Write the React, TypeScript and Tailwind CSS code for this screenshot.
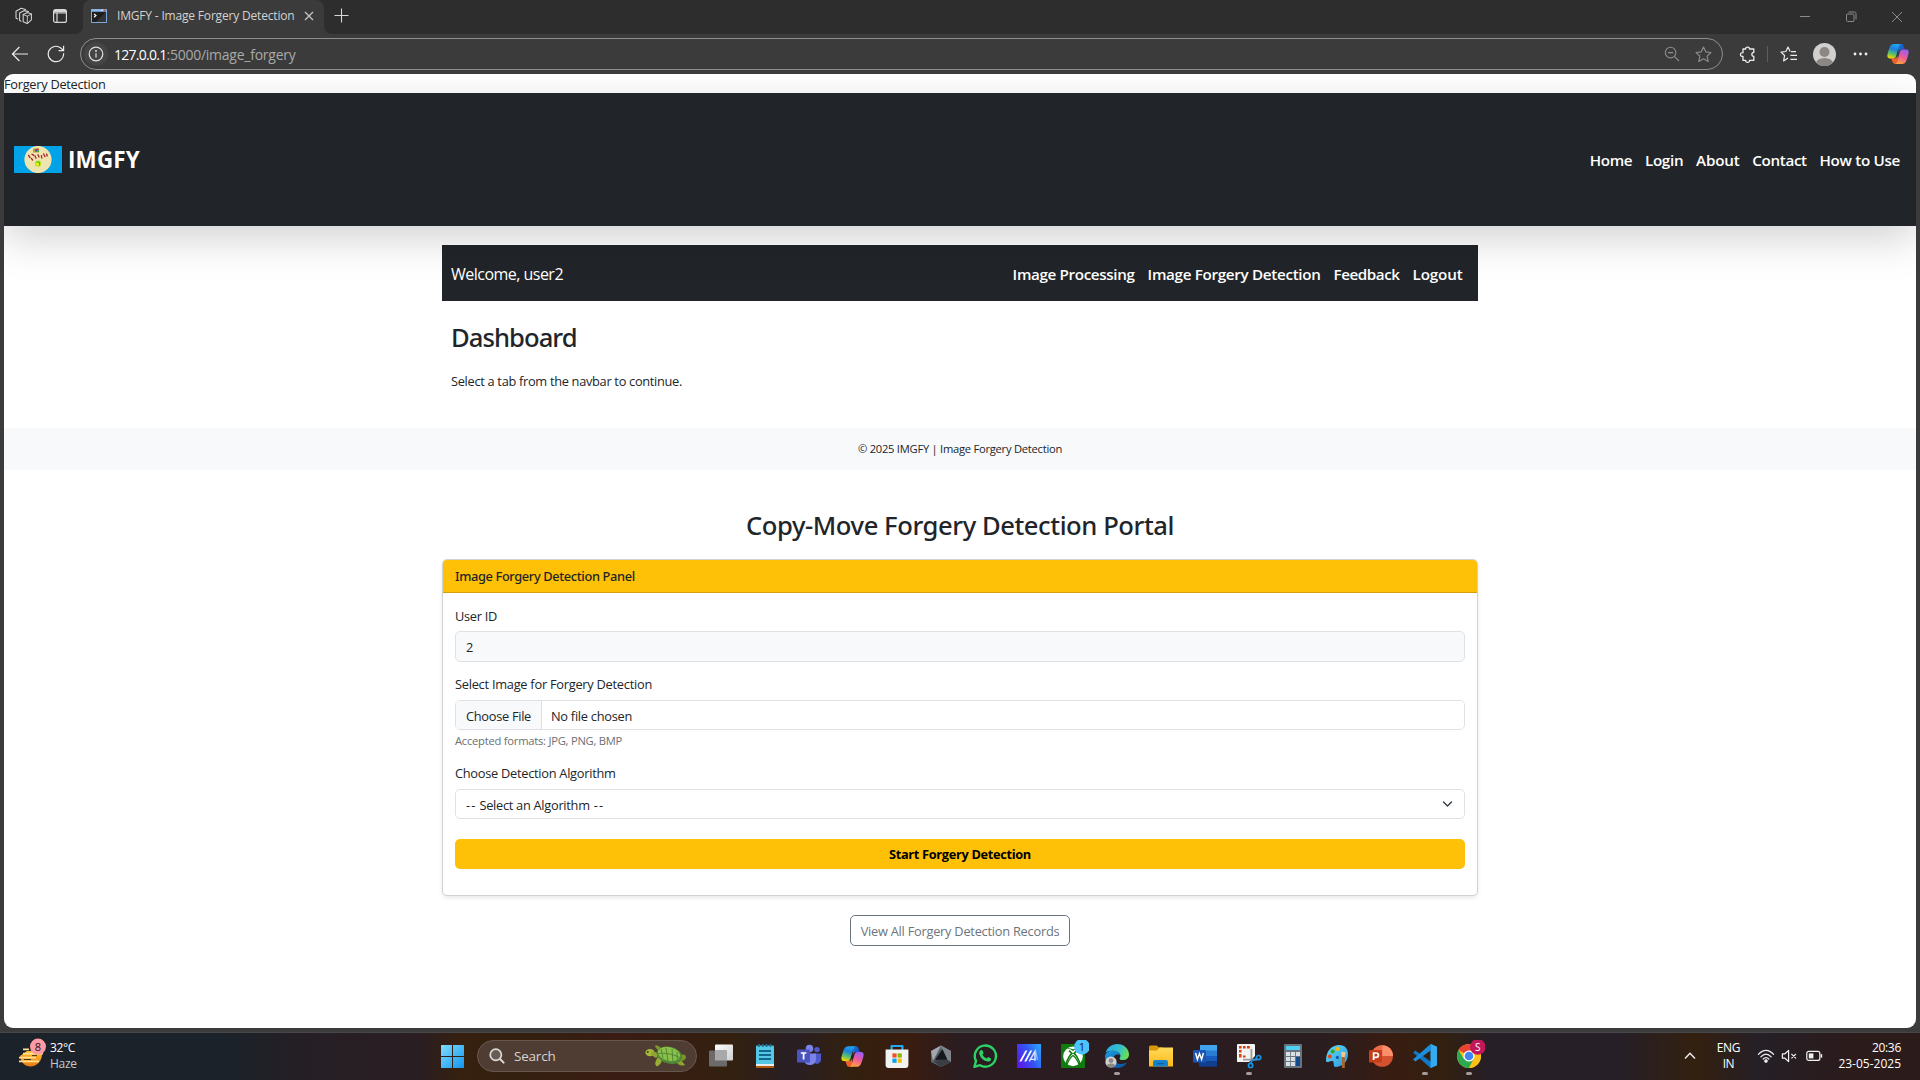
import type { ReactNode } from "react";

/* ---------- Browser chrome icons ---------- */

function WorkspacesIcon() {
  return (
    <svg width="18" height="18" viewBox="0 0 18 18" fill="none" stroke="#cfcfcf" strokeWidth="1.1" strokeLinejoin="round" strokeLinecap="round">
      <path d="M8.2 7.6 L12.4 5.6 L16.4 7 V12.8 L12.2 16.6 L8.2 14.8 Z" />
      <path d="M8.2 7.6 L12.4 9.2 L16.4 7 M12.4 9.2 L12.2 16.6" strokeWidth="0.9" />
      <path d="M6 14.2 L4.6 13.4 V6 L9.4 3.6 L13.4 4.6" />
      <path d="M2.6 12 L1 11 V4.2 L6.2 1.2 L10.6 2.6" />
    </svg>
  );
}

function TabActionsIcon() {
  return (
    <svg width="16" height="16" viewBox="0 0 16 16" fill="none" stroke="#d6d6d6" strokeWidth="1.2">
      <rect x="1.6" y="1.6" width="12.8" height="12.8" rx="2" />
      <path d="M1.6 5 H14.4 M5 5 V14" />
      <path d="M2 3.2 H14" strokeWidth="2.4" />
    </svg>
  );
}

function ConsoleFavicon() {
  return (
    <svg width="16" height="14" viewBox="0 0 16 14">
      <rect x="0" y="0" width="16" height="14" rx="0.8" fill="#7fa9dc" />
      <rect x="0.4" y="0.4" width="15.2" height="1.8" fill="#8fb9ef" />
      <rect x="10" y="0.8" width="1.6" height="1" fill="#e6f0fb" />
      <rect x="12.8" y="0.6" width="2" height="1.4" fill="#d6403a" />
      <rect x="1" y="2.8" width="14" height="10.2" fill="#1d1d1d" />
      <path d="M15 2.8 V13 H5 Z" fill="#333" />
      <path d="M3 5 L5 6.6 L3 8.2" fill="none" stroke="#fff" strokeWidth="1.1" />
    </svg>
  );
}

function CopilotLogo({ id, size }: { id: string; size: number }) {
  const a = `${id}-a`;
  const b = `${id}-b`;
  const c = `${id}-c`;
  return (
    <svg width={size} height={size} viewBox="0 0 24 24">
      <defs>
        <linearGradient id={a} x1="0.6" y1="0" x2="0.3" y2="1">
          <stop offset="0" stopColor="#1fa8f0" />
          <stop offset="0.35" stopColor="#1c7fe0" />
          <stop offset="0.7" stopColor="#5cc06a" />
          <stop offset="1" stopColor="#f6d800" />
        </linearGradient>
        <linearGradient id={b} x1="0.7" y1="0" x2="0.3" y2="1">
          <stop offset="0" stopColor="#9a5cf5" />
          <stop offset="0.5" stopColor="#ee5a9a" />
          <stop offset="1" stopColor="#ffa53a" />
        </linearGradient>
        <linearGradient id={c} x1="0" y1="0" x2="1" y2="0.6">
          <stop offset="0" stopColor="#1680e0" />
          <stop offset="1" stopColor="#1b3fb8" />
        </linearGradient>
      </defs>
      <path d="M12 1.2 H15.5 C17.6 1.2 18 2.6 18.6 4.8 C19 6.4 19.6 7.2 21 7.2 H15.6 C13.6 7.2 13 8.6 12.4 10.8 Z" fill={`url(#${c})`} />
      <path d="M12 22.8 H8.8 C6.6 22.8 6.1 21.4 5.5 19.2 C5.1 17.6 4.4 16.8 3 16.8 H8.4 C10.4 16.8 11 15.4 11.6 13.2 Z" fill="#f0602f" />
      <path d="M8 1.2 H15.5 C13.8 1.2 13.2 2.5 12.6 4.6 L10 13.8 C9.4 15.9 8.6 16.8 6.8 16.8 H3 C0.6 16.8 0 15 0.5 12.6 C1.2 9.4 2.2 6.6 3.2 4.2 C4.2 2 5.6 1.2 8 1.2 Z" fill={`url(#${a})`} />
      <path d="M16 22.8 H8.6 C10.3 22.8 10.8 21.5 11.4 19.4 L14 10.2 C14.6 8.1 15.4 7.2 17.2 7.2 H21 C23.4 7.2 24 9 23.5 11.4 C22.8 14.6 21.8 17.4 20.8 19.8 C19.8 22 18.4 22.8 16 22.8 Z" fill={`url(#${b})`} />
    </svg>
  );
}

function TabStrip() {
  return (
    <div className="flex h-[34px] shrink-0 items-start bg-[#2d2d2d]">
      <div className="flex h-[32px] w-[83px] shrink-0 items-center gap-[19px] pl-[15px]">
        <WorkspacesIcon />
        <TabActionsIcon />
      </div>
      <div className="relative flex h-[34px] w-[241px] shrink-0 items-start rounded-t-lg bg-[#3b3b3b] pl-[8px]">
        <svg className="absolute -left-[8px] bottom-0" width="8" height="8" viewBox="0 0 8 8"><path d="M8 0 V8 H0 C4.4 8 8 4.4 8 0 Z" fill="#3b3b3b" /></svg>
        <svg className="absolute -right-[8px] bottom-0" width="8" height="8" viewBox="0 0 8 8"><path d="M0 0 V8 H8 C3.6 8 0 4.4 0 0 Z" fill="#3b3b3b" /></svg>
        <div className="flex h-[32px] items-center">
          <ConsoleFavicon />
          <span className="ml-[10px] w-[187px] whitespace-nowrap text-[12px] tracking-[-0.18px] text-[#d2d2d2]">IMGFY - Image Forgery Detection</span>
          <svg width="10" height="10" viewBox="0 0 10 10" stroke="#c8c8c8" strokeWidth="1.2"><path d="M1 1 L9 9 M9 1 L1 9" /></svg>
        </div>
      </div>
      <svg className="ml-[10px] mt-[8px]" width="15" height="15" viewBox="0 0 15 15" stroke="#d8d8d8" strokeWidth="1.1"><path d="M7.5 0.5 V14.5 M0.5 7.5 H14.5" /></svg>
      <div className="ml-auto flex h-[33px] items-center gap-[34px] pr-[17px]">
        <svg width="12" height="12" viewBox="0 0 12 12" stroke="#8a8a8a"><path d="M1 5.5 H11" /></svg>
        <svg width="12" height="12" viewBox="0 0 12 12" fill="none" stroke="#8a8a8a"><rect x="1.5" y="3" width="7.5" height="7.5" rx="1" /><path d="M3.5 1 H9.5 Q11 1 11 2.5 V8.5" /></svg>
        <svg width="12" height="12" viewBox="0 0 12 12" stroke="#8a8a8a"><path d="M1 1 L11 11 M11 1 L1 11" /></svg>
      </div>
    </div>
  );
}

const STAR = "M8 1 L10.1 5.5 L15 6.1 L11.4 9.5 L12.4 14.6 L8 12.1 L3.6 14.6 L4.6 9.5 L1 6.1 L5.9 5.5 Z";

function Toolbar() {
  return (
    <div className="flex h-[40px] shrink-0 items-center bg-[#3b3b3b] pl-[11px] pr-[11px]">
      <svg width="18" height="16" viewBox="0 0 18 16" fill="none" stroke="#ececec" strokeWidth="1.2"><path d="M17 8 H1.4 M8.4 1 L1.4 8 L8.4 15" /></svg>
      <svg className="ml-[18px]" width="18" height="18" viewBox="0 0 18 18" fill="none" stroke="#ececec" strokeWidth="1.2"><path d="M16.6 8.2 A7.7 7.7 0 1 1 13.8 3 L16.4 5.4 M16.6 0.8 V5.6 H11.6" /></svg>
      <div className="ml-[15px] flex h-[32px] w-[1643px] shrink-0 items-center rounded-full border border-[#8e8e8e] pl-[3px] pr-[10px]">
        <div className="flex h-[24px] w-[24px] items-center justify-center rounded-full bg-[#454545]">
          <svg width="16" height="16" viewBox="0 0 16 16" fill="none" stroke="#e0e0e0" strokeWidth="1.2"><circle cx="8" cy="8" r="6.8" /><path d="M8 7.2 V11.4" /><circle cx="8" cy="5" r="0.4" /></svg>
        </div>
        <div className="ml-[6px] flex pt-px text-[14px] leading-[30px]">
          <span className="tracking-[-0.73px] text-white">127.0.0.1</span>
          <span className="tracking-[-0.25px] text-[#a9a9a9]">:5000/image_forgery</span>
        </div>
        <svg className="ml-auto" width="16" height="16" viewBox="0 0 16 16" fill="none" stroke="#8c8c8c" strokeWidth="1.1"><circle cx="6.6" cy="6.6" r="5.3" /><path d="M10.4 10.4 L15 15 M4 6.6 H9.2" /></svg>
        <svg className="ml-[15px]" width="17" height="17" viewBox="0 0 16 16" fill="none" stroke="#8c8c8c" strokeWidth="1.1" strokeLinejoin="round"><path d={STAR} /></svg>
      </div>
      <svg className="ml-[16px]" width="17" height="17" viewBox="0 0 17 17" fill="none" stroke="#ececec" strokeWidth="1.3" strokeLinejoin="round">
        <path d="M4 3 H6.7 C6.4 0.4 10.8 0.4 10.5 3 H14.8 V6.4 C12.2 6.2 12.2 10.6 14.8 10.3 V14.4 H10.5 C10.8 17 6.4 17 6.7 14.4 H4 V10.5 C0.6 10.8 0.6 6.3 4 6.6 Z" />
      </svg>
      <div className="ml-[11px] h-[16px] w-px bg-[#5e5e5e]" />
      <svg className="ml-[12px]" width="17" height="17" viewBox="0 0 17 17" fill="none" stroke="#ececec" strokeWidth="1.2" strokeLinejoin="round">
        <path d="M11 5.6 L16 5.6 M5.9 5.5 L8 1 L10.1 5.5 M5.9 5.5 L1 6.1 L4.6 9.5 L3.6 14.9 L8 12.1 M10.4 9.4 H17 M10.4 13.3 H17" />
      </svg>
      <svg className="ml-[16px]" width="23" height="23" viewBox="0 0 23 23">
        <defs><clipPath id="avatar-clip"><circle cx="11.5" cy="11.5" r="11.5" /></clipPath></defs>
        <g clipPath="url(#avatar-clip)"><rect width="23" height="23" fill="#d2d0ce" /><circle cx="11.5" cy="9" r="5" fill="#8a8784" /><ellipse cx="11.5" cy="20.5" rx="8.5" ry="5.6" fill="#8a8784" /></g>
      </svg>
      <svg className="ml-[17px]" width="15" height="4" viewBox="0 0 15 4" fill="#f0f0f0"><circle cx="2" cy="2" r="1.4" /><circle cx="7.5" cy="2" r="1.4" /><circle cx="13" cy="2" r="1.4" /></svg>
      <div className="ml-auto"><CopilotLogo id="bar" size={22} /></div>
    </div>
  );
}

/* ---------- Web page ---------- */

function SiteLogo() {
  return (
    <svg width="48" height="27" viewBox="0 0 48 27">
      <rect width="48" height="27" fill="#00a2e8" />
      <circle cx="24" cy="13.5" r="13.6" fill="#efe4b0" />
      <rect x="19" y="2.5" width="6" height="4" fill="#b5a642" />
      <rect x="21" y="3.4" width="2" height="2" fill="#3f48cc" />
      <rect x="22.5" y="2.6" width="2" height="1.6" fill="#ed1c24" />
      <rect x="23" y="4.4" width="2" height="1.6" fill="#22b14c" />
      <path d="M14.6 9.4 L16 11.6 M18 8.2 L19.8 9.4 M17.4 12.4 L18.6 14 M21 10 L22 12.2 M24 8.8 L25 11 M27.4 9.6 L27.8 12 M29.6 8 L31 10.6 M32.6 8 L33.2 10" stroke="#a3202c" strokeWidth="1.3" strokeLinecap="round" />
      <circle cx="24" cy="17.6" r="3.2" fill="#b5e61d" />
      <path d="M22.5 16 H25.5 V19.5" fill="none" stroke="#22b14c" strokeWidth="0.8" />
      <circle cx="23.6" cy="18.2" r="1.3" fill="#fff200" />
    </svg>
  );
}

function SiteHeader() {
  return (
    <header className="relative z-10 flex h-[133px] items-center bg-[#212529] pl-[10px] pr-[16px] shadow-[0_12.8px_38.4px_rgba(0,0,0,0.175)]">
      <SiteLogo />
      <span className="ml-[6px] pt-px text-[22.4px] font-bold tracking-[0.2px] text-white">IMGFY</span>
      <nav className="ml-auto flex gap-[12.8px] pt-px text-[15.2px] font-semibold text-white">
        <a className="tracking-[-0.4px]">Home</a>
        <a className="tracking-[-0.3px]">Login</a>
        <a className="tracking-[-0.2px]">About</a>
        <a className="tracking-[-0.35px]">Contact</a>
        <a className="tracking-[-0.32px]">How to Use</a>
      </nav>
    </header>
  );
}

function UserBar() {
  return (
    <div className="mx-auto mt-[19px] flex h-[56px] w-[1036px] items-center bg-[#212529] pl-[9px] pr-[15.5px] text-white">
      <span className="pt-px text-[16px] tracking-[-0.52px]">Welcome, user2</span>
      <nav className="ml-auto flex gap-[13px] pt-[2px] text-[15.2px] font-semibold">
        <a className="tracking-[-0.35px]">Image Processing</a>
        <a className="tracking-[-0.31px]">Image Forgery Detection</a>
        <a className="tracking-[-0.45px]">Feedback</a>
        <a className="tracking-[-0.15px]">Logout</a>
      </nav>
    </div>
  );
}

function DetectionPanel() {
  return (
    <section className="mx-auto mt-[17px] h-[337px] w-[1036px] overflow-hidden rounded-[5px] border border-[#d1d2d3] bg-white shadow-[0_2px_4px_rgba(0,0,0,0.09)]">
      <div className="flex h-[33px] items-center border-b border-[#d3a00b] bg-[#ffc107] pl-[12px] pt-[2px] font-['Noto_Sans',sans-serif] font-medium tracking-[-0.35px]">
        Image Forgery Detection Panel
      </div>
      <div className="px-[12px]">
        <label className="mt-[14px] block h-[19px] leading-[19px] tracking-[-0.29px]">User ID</label>
        <div className="mt-[5px] h-[31px] rounded-[5px] border border-[#dee2e6] bg-[#f8f9fb] pl-[10px] leading-[31px]">2</div>
        <label className="mt-[13px] block h-[19px] leading-[19px] tracking-[-0.25px]">Select Image for Forgery Detection</label>
        <div className="mt-[6px] flex h-[30px] overflow-hidden rounded-[5px] border border-[#dee2e6] leading-[30px]">
          <span className="w-[86px] border-r border-[#dee2e6] bg-[#f8f9fb] pl-[10px] tracking-[-0.29px]">Choose File</span>
          <span className="pl-[9px] tracking-[-0.27px]">No file chosen</span>
        </div>
        <p className="mt-[2px] h-[17px] text-[11.2px] leading-[17px] tracking-[-0.24px] text-[#6c6f72]">Accepted formats: JPG, PNG, BMP</p>
        <label className="mt-[15px] block h-[19px] leading-[19px] tracking-[-0.27px]">Choose Detection Algorithm</label>
        <div className="mt-[6px] flex h-[30px] items-center rounded-[5px] border border-[#dee2e6] pl-[10px] pr-[11px] leading-[20px] tracking-[-0.28px]">
          <span className="pt-px tracking-[1.1px]">--</span>
          <span className="ml-[3px] pt-px">Select an Algorithm</span>
          <span className="ml-[4px] pt-px tracking-[1.1px]">--</span>
          <svg className="ml-auto" width="11" height="8" viewBox="0 0 11 8" fill="none" stroke="#343a40" strokeWidth="1.4" strokeLinecap="round" strokeLinejoin="round"><path d="M1.5 2 L5.5 6 L9.5 2" /></svg>
        </div>
        <button className="mt-[20px] block h-[30px] w-full rounded-[5px] bg-[#ffc107] font-bold leading-[30px] tracking-[-0.33px] text-black">Start Forgery Detection</button>
      </div>
    </section>
  );
}

function WebPage() {
  return (
    <main className="mx-[4px] mb-[4px] flex-1 overflow-hidden rounded-[9px] bg-white text-[12.8px] text-[#212529]">
      <div className="h-[19px] leading-[20px] tracking-[-0.28px]">Forgery Detection</div>
      <SiteHeader />
      <UserBar />
      <div className="mx-auto w-[1036px] pl-[9px]">
        <h2 className="mt-[21px] h-[32px] font-['Noto_Sans',sans-serif] text-[25.6px] font-medium leading-[32px] tracking-[-0.95px]">Dashboard</h2>
        <p className="mt-[18px] h-[19px] leading-[19px] tracking-[-0.3px]">Select a tab from the navbar to continue.</p>
      </div>
      <footer className="mt-[37px] flex h-[42px] items-center justify-center bg-[#f8f9fb] text-[11.2px] tracking-[-0.26px]">© 2025 IMGFY | Image Forgery Detection</footer>
      <h2 className="mt-[40px] h-[32px] text-center font-['Noto_Sans',sans-serif] text-[25.6px] font-medium leading-[32px] tracking-[-0.43px]">Copy-Move Forgery Detection Portal</h2>
      <DetectionPanel />
      <div className="mt-[19px] flex justify-center">
        <button className="h-[31px] w-[220px] rounded-[5px] border border-[#6c757d] pt-px leading-[29px] tracking-[-0.24px] text-[#6c757d]">View All Forgery Detection Records</button>
      </div>
    </main>
  );
}

/* ---------- Taskbar ---------- */

function App24({ children, running }: { children: ReactNode; running?: boolean }) {
  return (
    <div className="relative flex h-full w-[44px] shrink-0 items-center justify-center">
      <svg width="32" height="32" viewBox="-4 -4 32 32">{children}</svg>
      {running && <span className="absolute bottom-[4px] left-[19px] h-[3px] w-[6px] rounded-full bg-[#a39c9b]" />}
    </div>
  );
}

function Turtle() {
  return (
    <svg width="44" height="24" viewBox="0 0 44 24">
      <ellipse cx="6" cy="8.6" rx="4.6" ry="3.6" fill="#a5b83a" />
      <path d="M8 7 Q13 8 15 11 L12 14 Q9 12 7 11 Z" fill="#8fa52e" />
      <path d="M16 3 Q12 0 11 2 Q12 6 17 7 Z" fill="#7f9a2c" />
      <path d="M14 13 Q9 20 13 22.5 Q18 20 18 15 Z" fill="#9aae35" />
      <path d="M32 18 Q36 23 41 21 Q38 17 35 15 Z" fill="#8fa52e" />
      <path d="M37 11 Q42 9 42 14 Q39 18 34 17 Z" fill="#7b962b" />
      <ellipse cx="25.5" cy="11.2" rx="13" ry="8.4" transform="rotate(14 25.5 11.2)" fill="#4f8a36" />
      <ellipse cx="25" cy="10" rx="11.4" ry="6.8" transform="rotate(14 25 10)" fill="#8dbf4b" />
      <path d="M17 5 L19 14 M22 3.8 L24 17 M28 5 L29 18 M33 8 L33.5 18 M14 9.5 Q25 8 37 14" stroke="#4f8a36" strokeWidth="1" fill="none" />
      <circle cx="3.8" cy="8" r="0.9" fill="#2f3a12" />
    </svg>
  );
}

function Weather() {
  return (
    <div className="flex w-[441px] shrink-0 items-center">
      <svg className="ml-[18px] mt-[-7px]" width="30" height="30" viewBox="0 0 30 30">
        <defs><linearGradient id="sun" x1="0" y1="0" x2="0" y2="1"><stop offset="0" stopColor="#ffc234" /><stop offset="1" stopColor="#ea7a14" /></linearGradient></defs>
        <path d="M2 18 C3 25 7 28.4 12.4 28.4 C19 28.4 24 23 24 16 L22 13 H9 Z" fill="url(#sun)" />
        <path d="M5 11.4 H11 M5 15.6 H25 M1 19.6 H18 M1 23.4 H21" stroke="#ffdf90" strokeWidth="1.9" />
        <path d="M6 21.5 H13 M14 17.6 H19" stroke="#4a3010" strokeWidth="1" />
        <circle cx="20" cy="8.6" r="8" fill="#ff99a4" />
        <text x="20" y="12.6" textAnchor="middle" fontSize="11" fill="#1c1216" fontFamily="Open Sans, sans-serif">8</text>
      </svg>
      <div className="ml-[2px] mt-[-1px] text-[12px] leading-[16px]">
        <div className="tracking-[-0.36px] text-white">32°C</div>
        <div className="tracking-[-0.3px] text-[#c6c8cb]">Haze</div>
      </div>
    </div>
  );
}

function AppIcons() {
  return (
    <div className="ml-[2px] flex h-full">
      <App24>
        <defs><linearGradient id="tv" x1="0" y1="0" x2="1" y2="1"><stop offset="0" stopColor="#fff" /><stop offset="1" stopColor="#cfcfcf" /></linearGradient></defs>
        <rect x="6" y="0.5" width="18" height="16" rx="1" fill="url(#tv)" />
        <rect x="0" y="6.5" width="18" height="16" rx="1" fill="#6b6b6b" />
        <rect x="6" y="6.5" width="12" height="10" fill="#a9a9a9" />
      </App24>
      <App24>
        <rect x="3" y="1.5" width="18" height="20" rx="1" fill="#54c6e6" />
        <path d="M3 20 H21 V22 H3 Z" fill="#e8eef0" /><path d="M3 22 H21 V24 H3 Z" fill="#b3590d" />
        <path d="M6 0 V3 M9.8 0 V3 M13.6 0 V3 M17.6 0 V3" stroke="#1a6f92" strokeWidth="1.7" />
        <path d="M6 7 H18 M6 11 H18 M6 15 H18" stroke="#12688c" strokeWidth="1.8" />
      </App24>
      <App24>
        <circle cx="20" cy="5.6" r="2.7" fill="#5059c9" /><circle cx="12.5" cy="4.6" r="3.8" fill="#7b83eb" />
        <path d="M17 9.4 H24 V16 A4 4 0 0 1 17 18.5 Z" fill="#5059c9" />
        <path d="M7 9.4 H19 V16 A6.2 6.4 0 0 1 7 16.5 Z" fill="#7b83eb" />
        <rect x="0" y="5.6" width="13" height="13" rx="1.2" fill="#4b53bc" />
        <path d="M3.8 9 H9.4 M6.6 9 V15.6" stroke="#fff" strokeWidth="1.7" />
      </App24>
      <div className="flex h-full w-[44px] items-center justify-center pr-px"><CopilotLogo id="task" size={23} /></div>
      <App24>
        <path d="M6.6 6 V2 H17.4 V6" fill="none" stroke="#23a9f2" strokeWidth="2.2" strokeLinejoin="round" />
        <path d="M0.6 5.6 H23.4 V21 Q23.4 24 20.4 24 H3.6 Q0.6 24 0.6 21 Z" fill="#f2f2f2" />
        <rect x="7.4" y="9.4" width="4.2" height="4.2" fill="#f25022" /><rect x="12.6" y="9.4" width="4.2" height="4.2" fill="#7fba00" />
        <rect x="7.4" y="14.6" width="4.2" height="4.2" fill="#00a4ef" /><rect x="12.6" y="14.6" width="4.2" height="4.2" fill="#ffb900" />
      </App24>
      <App24>
        <path d="M12 1.5 L22 7 V18 L12 23 L2 18 V7 Z" fill="#596069" />
        <path d="M12 1.5 L22 7 V18 L15 14 Z" fill="#7f858c" /><path d="M12 1.5 L2 7 L4 17 Z" fill="#a2a8ae" />
        <path d="M4 17 L12 23 L22 18 L17 15 Z" fill="#3a3f46" />
        <path d="M13.4 5 L6 16 L18.4 15.4 Z" fill="#15181c" />
      </App24>
      <App24>
        <path d="M1.4 22.8 L3 17 A10.6 10.6 0 1 1 7 21.2 Z" fill="none" stroke="#2bd366" strokeWidth="2.4" strokeLinejoin="round" />
        <path d="M7.2 6.6 Q9.2 5.4 9.8 7.2 L10.6 9.2 L9.4 10.8 Q10.8 13.4 13.6 14.6 L15.2 13 L18 14.4 Q18.2 17.6 14.8 17.6 Q8.2 16.6 6.2 9.8 Q6 8 7.2 6.6 Z" fill="#2bd366" />
      </App24>
      <App24>
        <defs><linearGradient id="my" x1="0" y1="0.7" x2="1" y2="0.2"><stop offset="0" stopColor="#5a1be8" /><stop offset="0.5" stopColor="#3552f5" /><stop offset="1" stopColor="#2aa0fa" /></linearGradient></defs>
        <rect width="24" height="24" fill="url(#my)" />
        <path d="M2.4 17.6 L8.4 6.6 H10.4 L4.4 17.6 Z M7.2 17.6 L13.2 6.6 H15.2 L9.2 17.6 Z" fill="#fff" />
        <path d="M12.2 17.4 L18 7.4 V16.8 M14 15.4 H18" fill="none" stroke="#dfe9ff" strokeWidth="1.4" />
        <path d="M18.6 6.6 L20.4 16" stroke="#a9c6ff" strokeWidth="1" />
      </App24>
      <App24>
        <rect width="24" height="24" rx="1" fill="#107c10" /><circle cx="12" cy="12.4" r="9.8" fill="#fff" />
        <path d="M5.2 4.8 Q8.6 4 12 7 Q15.4 4 18.8 4.8 Q17 3.4 12 5.2 Q7 3.4 5.2 4.8 Z" fill="#107c10" />
        <path d="M5 20 Q7.4 12.4 11 9.4 L8 6.6 M19 20 Q16.6 12.4 13 9.4 L16 6.6" fill="none" stroke="#107c10" strokeWidth="1.6" />
        <path d="M6 20.5 Q9 13.5 12 11.6 Q15 13.5 18 20.5" fill="none" stroke="#107c10" strokeWidth="1.2" />
        <circle cx="21" cy="2.8" r="7.8" fill="#4cc2ff" />
        <text x="21" y="6.8" textAnchor="middle" fontSize="11" fill="#10202c" fontFamily="Open Sans, sans-serif">1</text>
      </App24>
      <App24 running>
        <defs>
          <linearGradient id="ed1" x1="0" y1="0.2" x2="1" y2="0.5"><stop offset="0" stopColor="#2aa9e8" /><stop offset="0.6" stopColor="#35c1c9" /><stop offset="1" stopColor="#6be04e" /></linearGradient>
          <linearGradient id="ed2" x1="0" y1="0" x2="0.6" y2="1"><stop offset="0" stopColor="#1b9de2" /><stop offset="1" stopColor="#0c59a4" /></linearGradient>
        </defs>
        <path d="M0.6 9 C2 3.6 6.6 0 12.2 0 C19 0 24 5 24 10.4 C24 14 21 16 18 16 C14.8 16 14 14.8 15 13.4 C16.4 11 14.4 8 10.6 7.2 C6.6 6.4 2.4 7 0.6 9 Z" fill="url(#ed1)" />
        <path d="M0 12 C0.6 8.6 4 6.8 8 6.8 C11.6 6.8 14.6 8.6 15.2 11 C11 9.6 8 12 8.6 15.6 C9.4 19.6 14 21.6 21.8 18.4 C20 22 16.2 24 12 24 C5 24 0 18.6 0 12 Z" fill="url(#ed2)" />
        <circle cx="6" cy="18" r="5.6" fill="#d2d0ce" /><circle cx="6" cy="16.6" r="2.4" fill="#8a8784" /><path d="M2 22 Q2.4 19.6 6 19.6 Q9.6 19.6 10 22 Q6 25 2 22 Z" fill="#8a8784" />
      </App24>
      <App24>
        <path d="M0 3 Q0 1.4 1.4 1.4 H7.6 L10 3.6 H14 V8 H0 Z" fill="#d99a08" />
        <defs><linearGradient id="fo" x1="0" y1="0" x2="0" y2="1"><stop offset="0" stopColor="#ffda57" /><stop offset="1" stopColor="#fdb91c" /></linearGradient></defs>
        <path d="M0 6.4 H8 L10.4 3.6 H24 V22.6 H0 Z" fill="url(#fo)" />
        <path d="M4 22.6 V18 Q4 16 6 16 H17 Q19 16 19 18 V22.6 Z" fill="#1783cf" /><path d="M8 19.6 H15" stroke="#0d5f9e" strokeWidth="1.2" />
      </App24>
      <App24>
        <path d="M7 1 H24 V7 H7 Z" fill="#41a5ee" /><path d="M6 6.5 H24 V12 H6 Z" fill="#2b7cd3" /><path d="M6 12 H24 V17.5 H6 Z" fill="#185abd" /><path d="M6 17.4 H24 V22.6 H6 Z" fill="#103f91" />
        <rect x="0" y="6" width="13" height="12.6" rx="1.2" fill="#1c55b0" />
        <path d="M2.6 9 L4.4 15.4 L6.5 9.6 L8.6 15.4 L10.4 9" fill="none" stroke="#fff" strokeWidth="1.5" />
      </App24>
      <App24 running>
        <path d="M0 1 Q0 0 1 0 H17 Q18 0 18 1 V12 L12 18 H0 Z" fill="#f3f3f3" />
        <path d="M14.4 5 V17 M6 15.6 H20" stroke="#9b9b9b" strokeWidth="1.8" />
        <path d="M2 2 H4.6 V4.6 H2 Z M6 2 H8.6 V4.6 H6 Z M10 2 H12.8 V4.6 H10 Z M2 6 H4.6 V8.6 H2 Z M2 10 H4.6 V13.6 H2 Z M6 11.4 H8.6 V13.6 H6 Z" fill="#d9400f" />
        <circle cx="21.6" cy="13.6" r="2.1" fill="none" stroke="#1594e0" strokeWidth="1.7" /><circle cx="13.6" cy="21.4" r="2.1" fill="none" stroke="#1594e0" strokeWidth="1.7" /><path d="M20 14.6 L14.6 16.6 L14 19.4" fill="none" stroke="#1594e0" strokeWidth="1.8" />
      </App24>
      <App24>
        <rect x="3" y="0" width="18" height="24" rx="1" fill="#68737c" /><rect x="5" y="2" width="14" height="4" fill="#50d0f5" />
        <path d="M5 8 H9.2 V12 H5 Z M10 8 H14 V12 H10 Z M14.9 8 H19 V12 H14.9 Z M5 13 H9.2 V17 H5 Z M10 13 H14 V17 H10 Z M5 18 H9.2 V22 H5 Z M10 18 H14 V22 H10 Z" fill="#dadfe3" />
        <path d="M15 13 H19 V22 H15 Z" fill="#0f4c8f" />
      </App24>
      <App24>
        <defs><linearGradient id="pa" x1="0" y1="0" x2="1" y2="1"><stop offset="0" stopColor="#63dcf8" /><stop offset="1" stopColor="#2a97e0" /></linearGradient></defs>
        <path d="M1 16 C1 6 8 1 14 1 C20.4 1 23 5 23 10 C23 18 17 23 10.6 23 C7 23 10.4 17 7 17 C4 17 1 20 1 16 Z" fill="url(#pa)" />
        <circle cx="4.8" cy="12.6" r="2" fill="#e04a1c" /><circle cx="7.6" cy="7.4" r="2" fill="#37a70f" /><circle cx="12.6" cy="5" r="2" fill="#ffb900" /><circle cx="12.4" cy="13.4" r="1.6" fill="#0d5f9e" />
        <path d="M16 8 H20.6 L19.6 14 H17 Z" fill="#f3c98a" /><path d="M17 13 H19.8 V24 H17 Z" fill="#a8642b" />
      </App24>
      <App24>
        <circle cx="13.2" cy="12" r="10.8" fill="#d35230" /><path d="M13.2 1.2 A10.8 10.8 0 0 1 24 12 H13.2 Z" fill="#ff8f6b" /><path d="M13.2 1.2 V12 H2.4 A10.8 10.8 0 0 1 13.2 1.2 Z" fill="#ed6c47" />
        <rect x="0" y="6" width="13" height="12.6" rx="1.2" fill="#c43e1c" />
        <path d="M4.6 16 V9 H7 Q9.4 9 9.4 11.2 Q9.4 13.3 7 13.3 H4.6" fill="none" stroke="#fff" strokeWidth="1.7" />
      </App24>
      <App24 running>
        <path d="M17.6 0 L24 2.8 V21.2 L17.6 24 L0 8.6 L2.4 6.4 L17.6 17.6 Z" fill="#1079c4" />
        <path d="M17.6 0 L0 15.4 L2.4 17.6 L17.6 6.4 Z" fill="#1b8fde" /><path d="M17.6 0 L24 2.8 V21.2 L17.6 24 Z" fill="#35abf3" />
      </App24>
      <App24 running>
        <circle cx="12" cy="12" r="12" fill="#fbc116" />
        <path d="M12 12 L1.6 6 A12 12 0 0 1 22.4 6 Z" fill="#ea4335" /><path d="M1.6 6 A12 12 0 0 0 12 24 L17.2 15 L12 12 L6.8 15 Z" fill="#2da94f" />
        <path d="M12 6.6 H22.7 A12 12 0 0 1 12 24 L16.8 14.6 Z" fill="#fbc116" />
        <circle cx="12" cy="12" r="5.6" fill="#fff" /><circle cx="12" cy="12" r="4.3" fill="#4285f4" />
        <circle cx="20.8" cy="2.9" r="7.8" fill="#c2185b" />
        <text x="20.8" y="6.6" textAnchor="middle" fontSize="10" fill="#fff" fontFamily="Open Sans, sans-serif">S</text>
      </App24>
    </div>
  );
}

function Tray() {
  return (
    <div className="ml-auto flex h-full items-center pr-[19px] text-[12px] leading-[16px] text-white">
      <svg width="12" height="8" viewBox="0 0 12 8" fill="none" stroke="#f0f0f0" strokeWidth="1.4"><path d="M1 6.4 L6 1.2 L11 6.4" /></svg>
      <div className="ml-[20px] w-[24px] text-center tracking-[-0.45px]"><div>ENG</div><div>IN</div></div>
      <svg className="ml-[17px]" width="18" height="14" viewBox="0 0 18 14" fill="none" stroke="#f0f0f0" strokeWidth="1.2" strokeLinecap="round">
        <path d="M1.4 5.4 Q9 -2.6 16.6 5.4 M3.8 7.8 Q9 2.4 14.2 7.8 M6.2 10 Q9 7.2 11.8 10" /><circle cx="9" cy="12" r="1.2" fill="#f0f0f0" />
      </svg>
      <svg className="ml-[6px]" width="17" height="14" viewBox="0 0 17 14" fill="none" stroke="#f0f0f0" strokeWidth="1.2" strokeLinejoin="round"><path d="M1.4 4.8 H4 L7.6 1.4 V12.6 L4 9.2 H1.4 Z M10.4 4.8 L15 9.4 M15 4.8 L10.4 9.4" /></svg>
      <svg className="ml-[8px]" width="17" height="12" viewBox="0 0 17 12" fill="none" stroke="#f0f0f0" strokeWidth="1.2"><rect x="0.8" y="1.4" width="13" height="9" rx="2" /><rect x="2.8" y="3.4" width="4.6" height="5" fill="#f0f0f0" stroke="none" /><path d="M15.4 4.2 V7.6" strokeWidth="1.6" /></svg>
      <div className="ml-[15px] mt-[-1px] text-right"><div className="tracking-[-0.3px]">20:36</div><div>23-05-2025</div></div>
    </div>
  );
}

function Taskbar() {
  return (
    <div className="flex h-[48px] shrink-0 items-center border-t border-[#48474a] pb-px bg-[linear-gradient(90deg,#1c222a_0px,#1c222a_230px,#251f25_300px,#2a1e22_420px,#36200f_460px,#33200f_520px,#3a1c14_620px,#33200f_730px,#281e24_790px,#33200f_850px,#3a1c10_910px,#2a1c20_960px,#2a1d20_1320px,#381c12_1390px,#33200f_1440px,#261f27_1490px,#261f27_1620px,#33200f_1695px,#251f27_1760px,#2b1b1b_1850px,#2b1b1b_1920px)]">
      <Weather />
      <svg width="23" height="23" viewBox="0 0 23 23">
        <defs><linearGradient id="win" x1="0" y1="0" x2="1" y2="1"><stop offset="0" stopColor="#7fdcfd" /><stop offset="1" stopColor="#1296f0" /></linearGradient></defs>
        <path d="M0.5 0 H11 V11 H0 V0.5 Z M12 0 H22.5 L23 0.5 V11 H12 Z M0 12 H11 V23 H0.5 L0 22.5 Z M12 12 H23 V22.5 L22.5 23 H12 Z" fill="url(#win)" />
      </svg>
      <div className="ml-[13px] flex h-[32px] w-[220px] shrink-0 items-center rounded-full border border-[#67564d] bg-[#4f3d33] pl-[11px] pr-[8px]">
        <svg width="16" height="16" viewBox="0 0 16 16" fill="none" stroke="#dedad8" strokeWidth="1.7" strokeLinecap="round"><circle cx="6.8" cy="6.8" r="5.6" fill="#6a5d58" /><path d="M11 11 L14.6 14.6" strokeWidth="2" /></svg>
        <span className="ml-[9px] text-[13.5px] tracking-[-0.21px] text-[#d8d2cf]">Search</span>
        <div className="ml-auto"><Turtle /></div>
      </div>
      <AppIcons />
      <Tray />
    </div>
  );
}

export default function App() {
  return (
    <div className="flex h-[1080px] w-[1920px] flex-col overflow-hidden bg-[#3b3b3b] font-['Open_Sans',sans-serif]">
      <TabStrip />
      <Toolbar />
      <WebPage />
      <Taskbar />
    </div>
  );
}
